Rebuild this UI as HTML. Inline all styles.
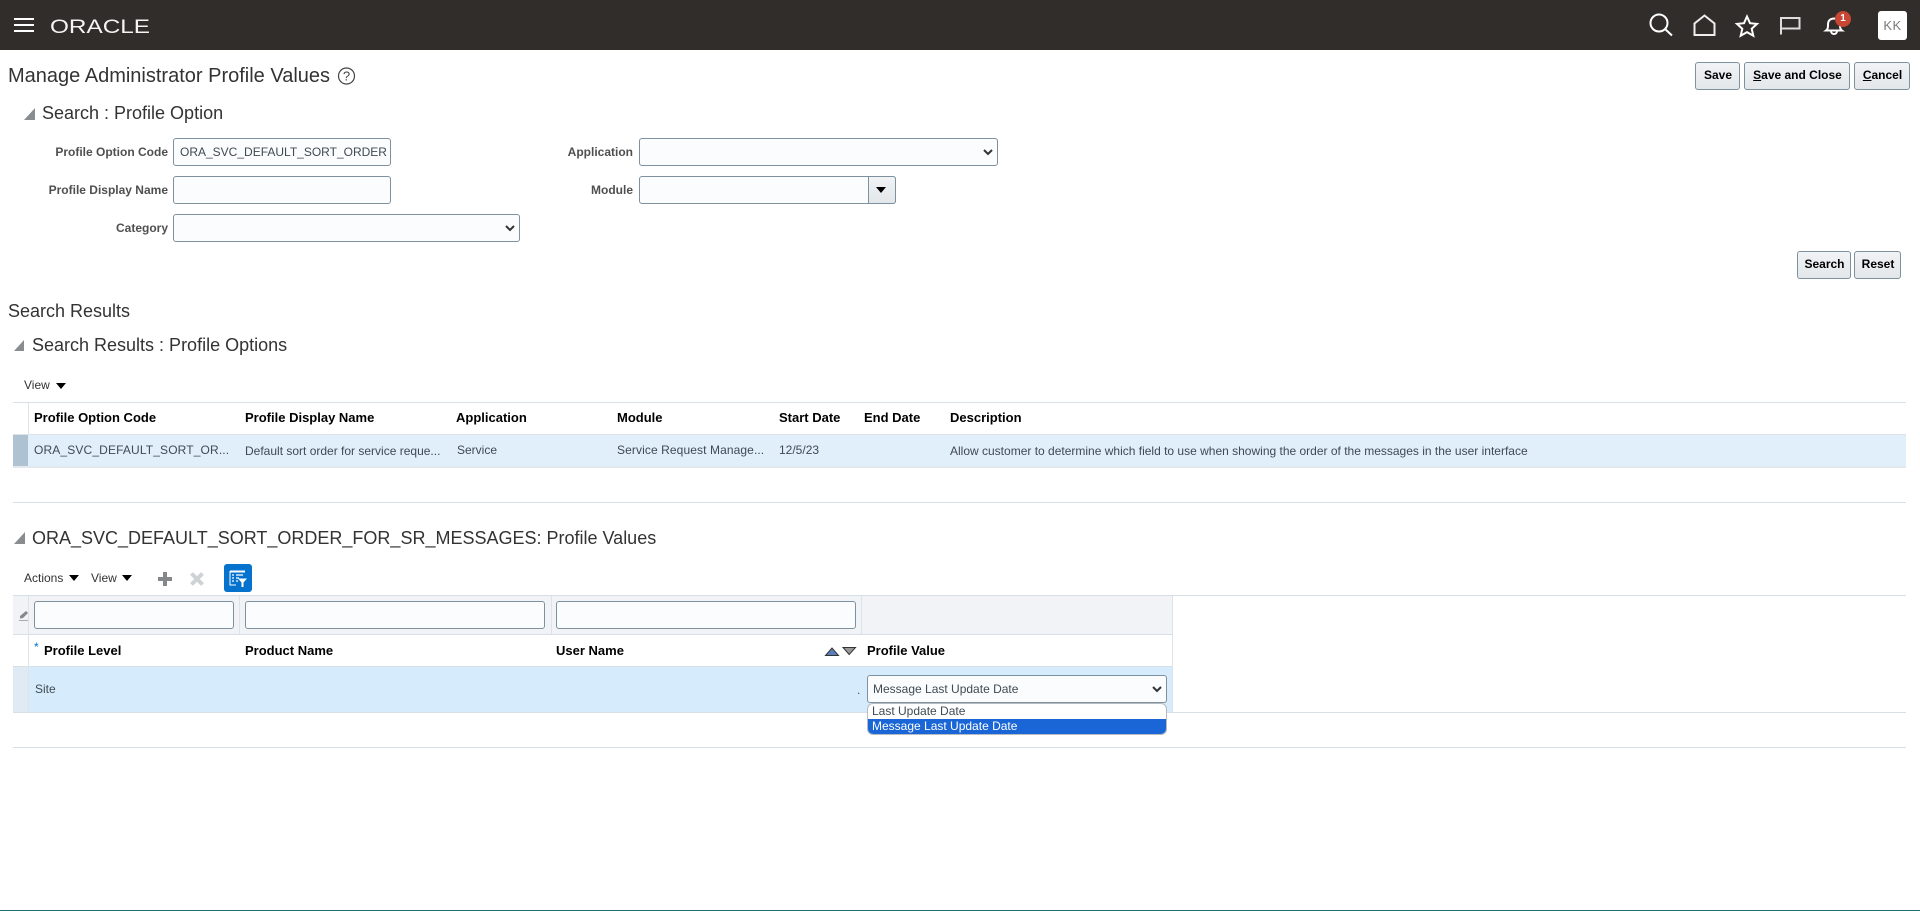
<!DOCTYPE html>
<html><head><meta charset="utf-8"><title>Manage Administrator Profile Values</title>
<style>
html,body{margin:0;padding:0;width:1920px;height:911px;overflow:hidden;background:#fff;font-family:"Liberation Sans",sans-serif;color:#333}
.a{position:absolute;white-space:nowrap}
.t{position:absolute;white-space:nowrap;line-height:20px;height:20px}
.h{font-size:18px;color:#333}
.lb{font-size:12px;font-weight:bold;color:#4f4f4f;text-align:right}
.th{font-size:13px;font-weight:bold;color:#000}
.td{font-size:12px;color:#3f4a52}
.in{position:absolute;box-sizing:border-box;border:1px solid #7e919e;border-radius:3px;background:#fbfcfe;height:28px}
.btn{position:absolute;box-sizing:border-box;height:28px;border:1px solid #7e919e;border-radius:3px;background:linear-gradient(#f1f3f5,#e3e7ea);font-size:12px;font-weight:bold;color:#000;text-align:center;line-height:25px;padding-left:1px}
.ln{position:absolute;height:1px;background:#d9dfe6}
.chev{position:absolute;width:12px;height:8px}
.tri{position:absolute;width:0;height:0;border-left:5px solid transparent;border-right:5px solid transparent;border-top:6px solid #000}
.col{position:absolute;width:1px;background:#dde3ea}
</style></head><body>

<div class="a" style="left:0;top:0;width:1920px;height:50px;background:#312d2a"></div>
<div class="a" style="left:14px;top:18px;width:20px;height:2px;background:#fff"></div>
<div class="a" style="left:14px;top:24px;width:20px;height:2px;background:#fff"></div>
<div class="a" style="left:14px;top:30px;width:20px;height:2px;background:#fff"></div>
<svg class="a" style="left:49px;top:14px" width="104" height="24"><text x="1" y="19" font-family="Liberation Sans" font-size="19" fill="#f4f4f4" textLength="100" lengthAdjust="spacingAndGlyphs">ORACLE</text></svg>

<svg class="a" style="left:1644px;top:8px" width="30" height="30" fill="none" stroke="#fff" stroke-width="2"><circle cx="15" cy="15" r="8.500"/><path d="M21 21l7 6.500"/></svg>
<svg class="a" style="left:1689px;top:10px" width="30" height="30" fill="none" stroke="#eee" stroke-width="2"><path d="M5.500 25V13.500L15.500 5.500l10 8V25z"/></svg>
<svg class="a" style="left:1732px;top:11px" width="30" height="28" fill="none" stroke="#fff" stroke-width="2"><path d="M15 5.500l3 6.700 7 .7-5.300 4.800 1.600 7L15 21.100 8.700 24.700l1.600-7L5 12.900l7-.7z"/></svg>
<svg class="a" style="left:1776px;top:12px" width="28" height="26" fill="none" stroke="#ddd" stroke-width="2"><path d="M5 22.500V5"/><path d="M5 6h18.500v10.500H5"/></svg>
<svg class="a" style="left:1820px;top:12px" width="28" height="26" fill="none" stroke="#fff" stroke-width="2"><path d="M6 18.500c2-1.500 2-3 2-6 0-4 2.500-6 6-6s6 2 6 6c0 3 0 4.500 2 6zM11 19c0 4 6 4 6 0"/></svg>
<div class="a" style="left:1835px;top:11px;width:16px;height:16px;border-radius:8px;background:#c74634;color:#fff;font-size:10px;font-weight:bold;text-align:center;line-height:16px">1</div>
<div class="a" style="left:1878px;top:11px;width:29px;height:29px;border-radius:3px;background:#fff;color:#7a7a7a;font-size:13px;text-align:center;line-height:29px;letter-spacing:.5px">KK</div>

<div class="t" style="left:8px;top:65px;font-size:20px;color:#333;line-height:22px;height:22px">Manage Administrator Profile Values</div>
<svg class="a" style="left:336px;top:66px" width="20" height="20" fill="none"><circle cx="10.500" cy="10" r="8" stroke="#444" stroke-width="1.200"/><text x="10.500" y="14.500" font-family="Liberation Sans" font-size="13" fill="#444" text-anchor="middle">?</text></svg>

<div class="btn" style="left:1695px;top:62px;width:45px">Save</div>
<div class="btn" style="left:1744px;top:62px;width:106px"><u>S</u>ave and Close</div>
<div class="btn" style="left:1854px;top:62px;width:56px"><u>C</u>ancel</div>

<svg class="a" style="left:24px;top:108px" width="12" height="12"><path d="M0 12L11 0v12z" fill="#8a8d90"/></svg>
<div class="t h" style="left:42px;top:103px">Search : Profile Option</div>

<div class="t lb" style="left:0;width:168px;top:142px">Profile Option Code</div>
<div class="in" style="left:173px;top:138px;width:218px;font-size:12px;color:#3f4a52;line-height:26px;padding-left:6px;overflow:hidden">ORA_SVC_DEFAULT_SORT_ORDER</div>
<div class="t lb" style="left:0;width:168px;top:180px">Profile Display Name</div>
<div class="in" style="left:173px;top:176px;width:218px"></div>
<div class="t lb" style="left:0;width:168px;top:218px">Category</div>
<div class="in" style="left:173px;top:214px;width:347px"></div>
<svg class="chev" style="left:504px;top:224px" viewBox="0 0 12 8"><path d="M2 2l4 4 4-4" fill="none" stroke="#333" stroke-width="2"/></svg>

<div class="t lb" style="left:500px;width:133px;top:142px">Application</div>
<div class="in" style="left:639px;top:138px;width:359px"></div>
<svg class="chev" style="left:982px;top:148px" viewBox="0 0 12 8"><path d="M2 2l4 4 4-4" fill="none" stroke="#333" stroke-width="2"/></svg>
<div class="t lb" style="left:500px;width:133px;top:180px">Module</div>
<div class="in" style="left:639px;top:176px;width:257px"></div>
<div class="a" style="left:868px;top:176px;width:28px;height:28px;box-sizing:border-box;border:1px solid #7e919e;border-radius:0 3px 3px 0;background:linear-gradient(#f1f3f5,#e3e7ea)"></div>
<div class="tri" style="left:876px;top:187px"></div>

<div class="btn" style="left:1797px;top:251px;width:54px">Search</div>
<div class="btn" style="left:1854px;top:251px;width:47px">Reset</div>

<div class="t h" style="left:8px;top:301px">Search Results</div>
<svg class="a" style="left:14px;top:340px" width="11" height="11"><path d="M0 11L10 0v11z" fill="#8a8d90"/></svg>
<div class="t h" style="left:32px;top:335px">Search Results : Profile Options</div>

<div class="t" style="left:24px;top:375px;font-size:12px;color:#333">View</div>
<div class="tri" style="left:56px;top:383px"></div>

<div class="ln" style="left:13px;top:402px;width:1893px"></div>
<div class="a" style="left:13px;top:435px;width:1893px;height:31px;background:#e1effb"></div>
<div class="a" style="left:13px;top:435px;width:15px;height:31px;background:#aec2d2"></div>
<div class="col" style="left:28px;top:403px;height:31px"></div>
<div class="ln" style="left:13px;top:434px;width:1893px;background:#dde3ea"></div>
<div class="ln" style="left:13px;top:466px;width:1893px;height:2px;background:#e3e8ee"></div>
<div class="ln" style="left:13px;top:502px;width:1893px"></div>

<div class="t th" style="left:34px;top:408px">Profile Option Code</div>
<div class="t th" style="left:245px;top:408px">Profile Display Name</div>
<div class="t th" style="left:456px;top:408px">Application</div>
<div class="t th" style="left:617px;top:408px">Module</div>
<div class="t th" style="left:779px;top:408px">Start Date</div>
<div class="t th" style="left:864px;top:408px">End Date</div>
<div class="t th" style="left:950px;top:408px">Description</div>

<div class="t td" style="left:34px;top:440px;letter-spacing:.14px">ORA_SVC_DEFAULT_SORT_OR...</div>
<div class="t td" style="left:245px;top:441px">Default sort order for service reque...</div>
<div class="t td" style="left:457px;top:440px">Service</div>
<div class="t td" style="left:617px;top:440px;letter-spacing:.1px">Service Request Manage...</div>
<div class="t td" style="left:779px;top:440px">12/5/23</div>
<div class="t td" style="left:950px;top:441px">Allow customer to determine which field to use when showing the order of the messages in the user interface</div>

<svg class="a" style="left:14px;top:532px" width="12" height="12"><path d="M0 12L11 0v12z" fill="#8a8d90"/></svg>
<div class="t h" style="left:32px;top:528px">ORA_SVC_DEFAULT_SORT_ORDER_FOR_SR_MESSAGES: Profile Values</div>

<div class="t" style="left:24px;top:568px;font-size:12px;color:#333">Actions</div>
<div class="tri" style="left:69px;top:575px"></div>
<div class="t" style="left:91px;top:568px;font-size:12px;color:#333">View</div>
<div class="tri" style="left:122px;top:575px"></div>
<svg class="a" style="left:157px;top:571px" width="16" height="16"><path d="M6 1h4v5h5v4h-5v5H6v-5H1V6h5z" fill="#85888b"/></svg>
<svg class="a" style="left:189px;top:571px" width="16" height="16"><path d="M2.500 2.500l11 11M13.500 2.500l-11 11" stroke="#cfd2d4" stroke-width="4"/></svg>
<div class="a" style="left:224px;top:564px;width:28px;height:28px;background:#0572ce;border-radius:3px"></div>
<svg class="a" style="left:224px;top:564px" width="28" height="28" fill="none"><path d="M6 7.500h15" stroke="#fff" stroke-width="2"/><path d="M6 7v14h6" stroke="#fff"/><path d="M8 11h2M12 11h7M8 14h2M12 14h3M8 17h2M12 17h2" stroke="#fff" stroke-width="1.300"/><path d="M14 14.500h9l-3.500 4v4.500h-2v-4.500z" fill="#fff"/></svg>

<div class="ln" style="left:13px;top:595px;width:1893px"></div>
<div class="a" style="left:13px;top:596px;width:1160px;height:38px;background:#f1f3f7"></div>
<div class="ln" style="left:13px;top:634px;width:1160px"></div>
<div class="a" style="left:13px;top:666px;width:1160px;height:46px;background:#d6ecfd"></div>
<div class="a" style="left:13px;top:666px;width:15px;height:46px;background:#dfeaf4"></div>
<div class="ln" style="left:13px;top:666px;width:1160px"></div>
<div class="ln" style="left:13px;top:712px;width:1893px"></div>
<div class="ln" style="left:13px;top:747px;width:1893px"></div>
<div class="col" style="left:28px;top:596px;height:116px"></div>
<div class="col" style="left:239px;top:596px;height:38px"></div>
<div class="col" style="left:551px;top:596px;height:38px"></div>
<div class="col" style="left:861px;top:596px;height:38px"></div>
<div class="col" style="left:1172px;top:596px;height:116px"></div>

<svg class="a" style="left:19px;top:607px" width="10" height="16"><path d="M1 9l6-5 2 2-5 5-3 .5z" fill="#888"/><path d="M0 13.500h9" stroke="#aaa"/></svg>
<div class="in" style="left:34px;top:601px;width:200px"></div>
<div class="in" style="left:245px;top:601px;width:300px"></div>
<div class="in" style="left:556px;top:601px;width:300px"></div>

<div class="a" style="left:34px;top:640px;font-size:12px;color:#0572ce;line-height:14px">*</div>
<div class="t th" style="left:44px;top:641px">Profile Level</div>
<div class="t th" style="left:245px;top:641px">Product Name</div>
<div class="t th" style="left:556px;top:641px">User Name</div>
<div class="t th" style="left:867px;top:641px">Profile Value</div>
<svg class="a" style="left:824px;top:645px" width="34" height="12"><path d="M1.500 10.500L8 3l6.500 7.500z" fill="#5b7fbc" stroke="#333"/><path d="M19 2.500h12.500L25.200 9.500z" fill="#999" stroke="#333"/></svg>

<div class="t td" style="left:35px;top:679px">Site</div>
<div class="a" style="left:857px;top:683px;font-size:12px;color:#555;line-height:14px">.</div>
<div class="in" style="left:867px;top:675px;width:300px;font-size:12px;color:#3f4a52;line-height:26px;padding-left:5px">Message Last Update Date</div>
<svg class="chev" style="left:1151px;top:685px" viewBox="0 0 12 8"><path d="M2 2l4 4 4-4" fill="none" stroke="#333" stroke-width="2"/></svg>
<div class="a" style="left:867px;top:703px;width:300px;height:32px;box-sizing:border-box;border:1px solid #b8bcc0;border-radius:6px;background:#fff;overflow:hidden;font-size:12px;color:#3f4a52;line-height:15px">
<div style="height:15px;padding-left:4px">Last Update Date</div>
<div style="height:16px;padding-left:4px;background:#1a66d6;color:#fff">Message Last Update Date</div>
</div>

<div class="a" style="left:0;top:910px;width:1920px;height:1px;background:#1f6a73"></div>
</body></html>
